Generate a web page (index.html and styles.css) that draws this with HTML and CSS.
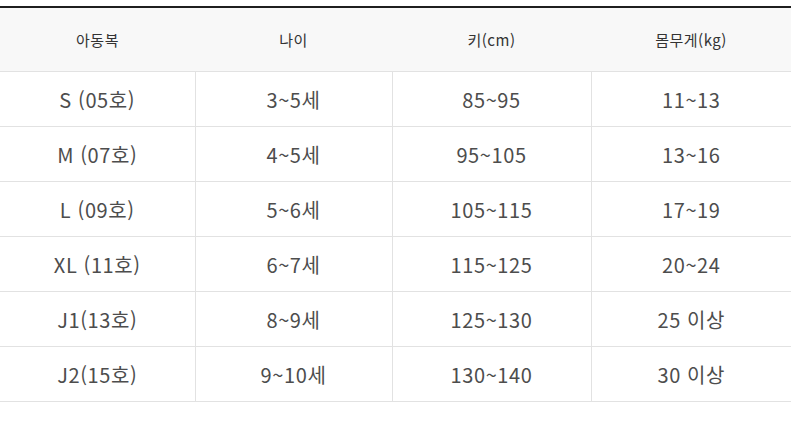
FILE: index.html
```html
<!DOCTYPE html>
<html lang="ko">
<head>
<meta charset="utf-8">
<title>아동복 사이즈</title>
<link rel="stylesheet" href="styles.css">
</head>
<body>
<table class="size-table">
  <colgroup>
    <col class="c1"><col class="c2"><col class="c3"><col class="c4">
  </colgroup>
  <thead>
    <tr><th>아동복</th><th>나이</th><th>키(cm)</th><th>몸무게(kg)</th></tr>
  </thead>
  <tbody>
    <tr><td>S (05호)</td><td>3~5세</td><td>85~95</td><td>11~13</td></tr>
    <tr><td>M (07호)</td><td>4~5세</td><td>95~105</td><td>13~16</td></tr>
    <tr><td>L (09호)</td><td>5~6세</td><td>105~115</td><td>17~19</td></tr>
    <tr><td>XL (11호)</td><td>6~7세</td><td>115~125</td><td>20~24</td></tr>
    <tr><td>J1(13호)</td><td>8~9세</td><td>125~130</td><td>25 이상</td></tr>
    <tr><td>J2(15호)</td><td>9~10세</td><td>130~140</td><td>30 이상</td></tr>
  </tbody>
</table>
</body>
</html>
```
FILE: styles.css
```css
html, body {
  margin: 0;
  padding: 0;
  background: #ffffff;
}
body {
  padding-top: 6px;
  font-family: "Noto Sans CJK KR", "Noto Sans", sans-serif;
}
.size-table {
  width: 791px;
  border-collapse: collapse;
  table-layout: fixed;
  border-top: 2px solid #1e1e1e;
}
.c1 { width: 195px; }
.c2 { width: 197px; }
.c3 { width: 199px; }
.c4 { width: 200px; }
.size-table th {
  height: 63px;
  padding: 0;
  background: #f8f8f8;
  color: #333333;
  font-size: 15px;
  font-weight: 400;
  letter-spacing: 0.5px;
  border-bottom: 1px solid #e2e2e2;
  text-align: center;
}
.size-table td {
  height: 54px;
  padding: 0;
  color: #4d4d4d;
  font-size: 20px;
  letter-spacing: 0.6px;
  text-align: center;
  border-bottom: 1px solid #e2e2e2;
  border-left: 1px solid #e2e2e2;
}
.size-table td:first-child {
  border-left: none;
}
```
